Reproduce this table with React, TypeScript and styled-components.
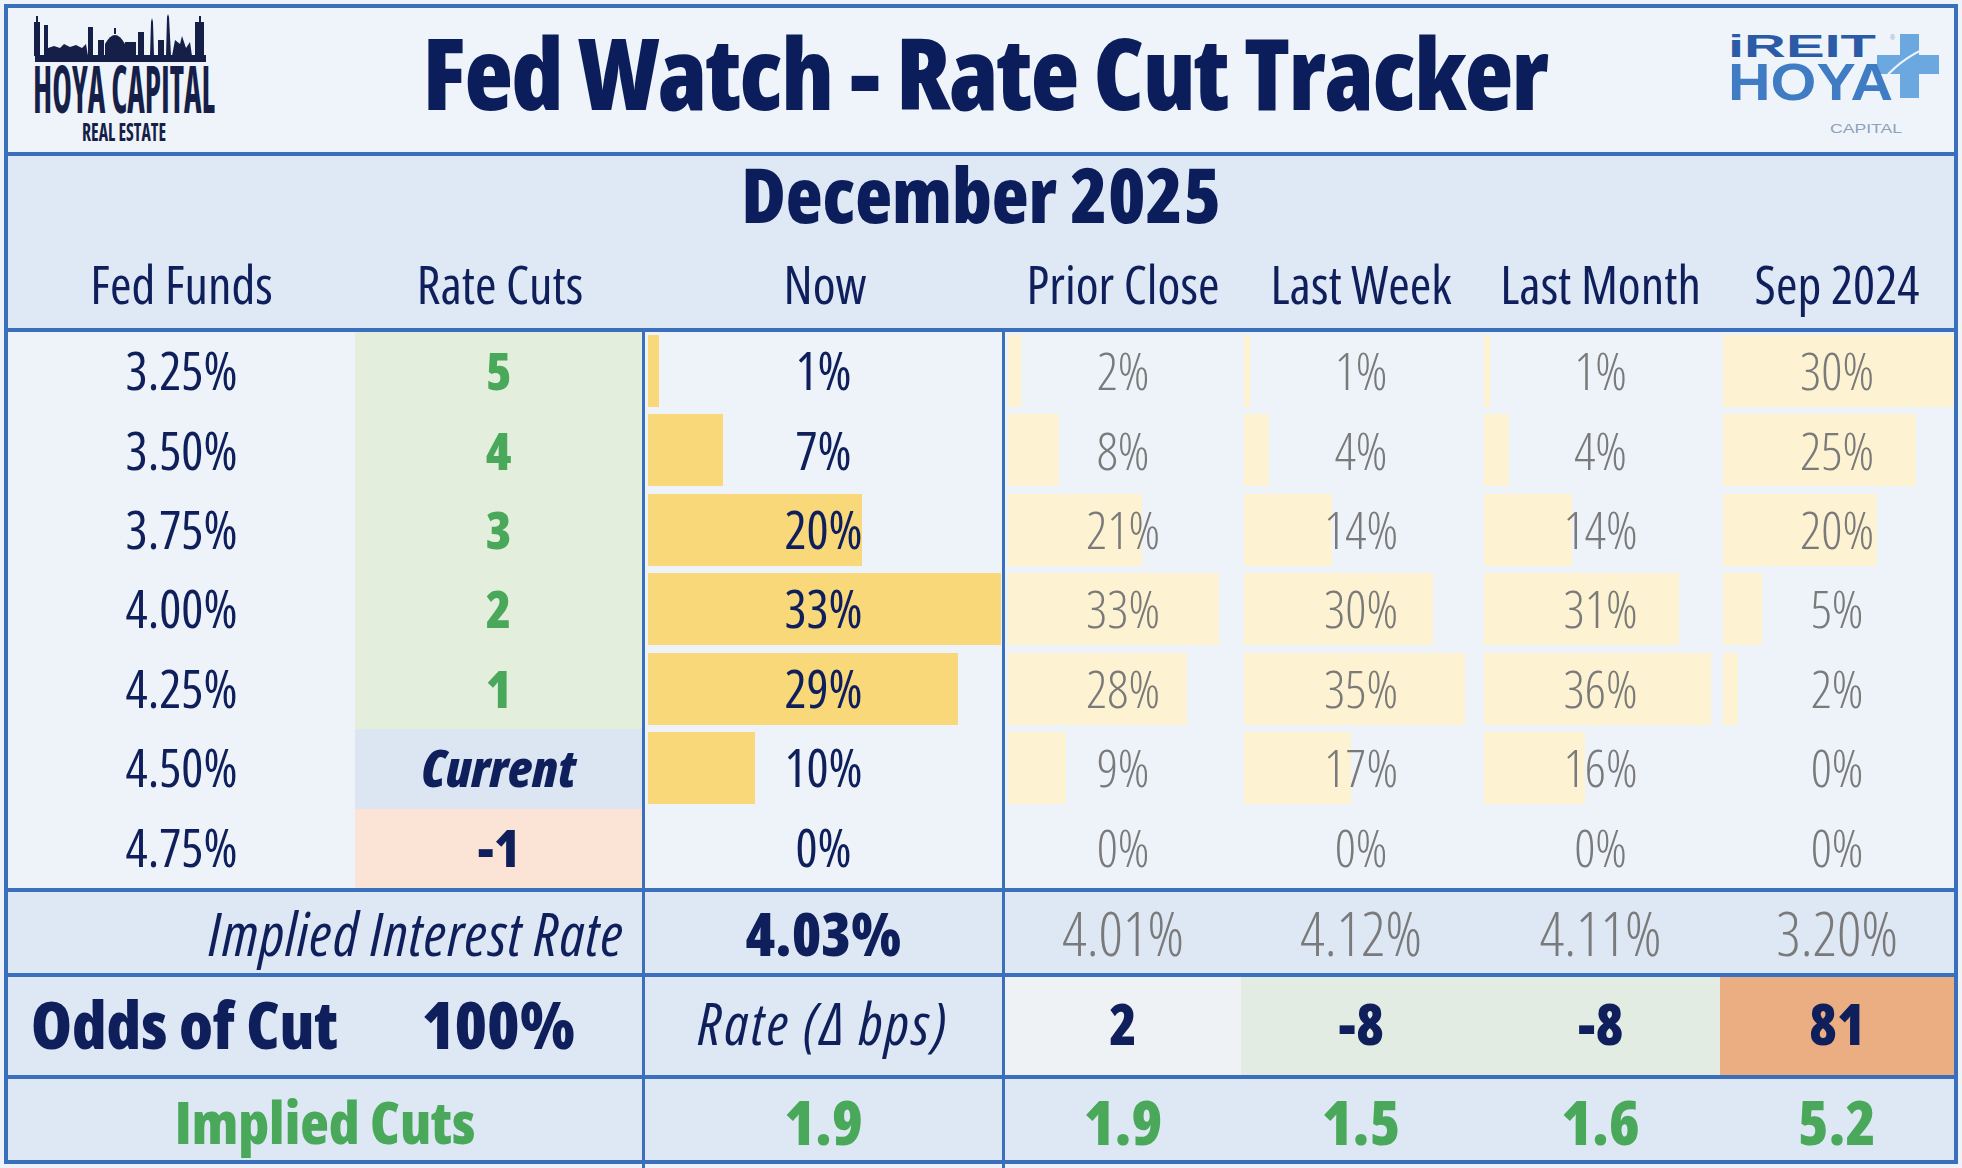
import React from "react";
import styled, { createGlobalStyle } from "styled-components";

const NAVY = "#0f1f5c";
const GRAY = "#7a7a7a";
const GREEN = "#4aa85a";
const BLUE = "#3a6fbb";
const COLS = "347px 290px 360px 236px 240px 239px 234px";

const Global = createGlobalStyle`
  html, body { margin: 0; padding: 0; background: #eef3f9; }
  body { font-family: "Open Sans", "Liberation Sans", sans-serif; }
`;

const Page = styled.div`
  width: 1962px;
  height: 1168px;
  padding: 4px;
  box-sizing: border-box;
`;

const Board = styled.div`
  width: 1954px;
  border: 4px solid ${BLUE};
  box-sizing: border-box;
  font-family: "Open Sans", "Liberation Sans", sans-serif;
  font-stretch: 75%;
  color: ${NAVY};
`;

/* ---------- title ---------- */
const TitleRow = styled.header`
  height: 144px;
  box-sizing: content-box;
  border-bottom: 4px solid ${BLUE};
  background: #eef4fa;
  display: grid;
  grid-template-columns: 1fr auto 1fr;
  align-items: start;
`;

const Title = styled.h1`
  margin: 0;
  align-self: center;
  font-size: 100px;
  line-height: 120px;
  font-weight: 800;
  letter-spacing: -1.5px;
  color: #0c1d5b;
  white-space: nowrap;
  padding: 0 0 18px 8px;
`;

const LeftLogoBox = styled.div`
  justify-self: start;
  margin: 6px 0 0 22px;
`;

const RightLogoBox = styled.div`
  justify-self: end;
  margin: 12px 9px 0 0;
`;

/* ---------- header ---------- */
const HeaderBlock = styled.section`
  height: 172px;
  box-sizing: content-box;
  border-bottom: 4px solid ${BLUE};
  background: #dfe8f5;
  display: flex;
  flex-direction: column;
`;

const Month = styled.h2`
  margin: 0;
  text-align: center;
  font-size: 76px;
  line-height: 76px;
  font-weight: 800;
  color: #0c1d5b;
`;

const HeaderGrid = styled.div`
  display: grid;
  grid-template-columns: ${COLS};
  margin-top: 22px;
`;

const HeadLabel = styled.div`
  text-align: center;
  font-size: 52px;
  line-height: 60px;
  font-weight: 400;
  white-space: nowrap;
`;

/* ---------- data ---------- */
const DataGrid = styled.div`
  display: grid;
  grid-template-columns: ${COLS};
  grid-auto-rows: 79.43px;
  background: #edf3f9;
`;

const RateCell = styled.div`
  display: flex;
  align-items: center;
  justify-content: center;
  padding-bottom: 4px;
  font-size: 52px;
  font-stretch: 87%;
  font-weight: 400;
  color: ${NAVY};
`;

type Tone = "green" | "current" | "neg";
const toneBg: Record<Tone, string> = {
  green: "#e3efdc",
  current: "#dce6f3",
  neg: "#fbe4d6",
};

const CutCell = styled.div<{ $tone: Tone }>`
  display: flex;
  align-items: center;
  justify-content: center;
  padding-bottom: 4px;
  background: ${(p) => toneBg[p.$tone]};
  border-right: 3px solid ${BLUE};
  box-sizing: border-box;
  font-size: 52px;
  font-weight: 800;
  font-style: ${(p) => (p.$tone === "current" ? "italic" : "normal")};
  color: ${(p) => (p.$tone === "green" ? GREEN : NAVY)};
`;

const BarCell = styled.div<{ $divider?: boolean }>`
  display: grid;
  grid-template: 1fr / 1fr;
  box-sizing: border-box;
  border-right: ${(p) => (p.$divider ? `3px solid ${BLUE}` : "none")};
`;

const Bar = styled.div<{ $strong?: boolean }>`
  grid-area: 1 / 1;
  justify-self: start;
  align-self: start;
  height: 72px;
  margin: 3px 0 0 3px;
  background: ${(p) => (p.$strong ? "#f8d878" : "#fdf2d2")};
`;

const BarValue = styled.div<{ $strong?: boolean }>`
  grid-area: 1 / 1;
  display: flex;
  align-items: center;
  justify-content: center;
  padding-bottom: 4px;
  font-size: 52px;
  font-stretch: 87%;
  font-weight: ${(p) => (p.$strong ? 400 : 360)};
  color: ${(p) => (p.$strong ? NAVY : GRAY)};
`;

/* ---------- summary ---------- */
const SummaryRow = styled.div<{ $h: number; $lift: number }>`
  display: grid;
  grid-template-columns: ${COLS};
  height: ${(p) => p.$h}px;
  box-sizing: content-box;
  border-top: 4px solid ${BLUE};
  background: #dee8f5;

  & > * {
    padding-bottom: ${(p) => p.$lift}px;
  }
`;

const SumCell = styled.div<{
  $span?: boolean;
  $divider?: boolean;
  $align?: "left" | "right" | "center";
  $bg?: string;
}>`
  grid-column: ${(p) => (p.$span ? "1 / 3" : "auto")};
  display: flex;
  align-items: center;
  justify-content: ${(p) =>
    p.$align === "left" ? "flex-start" : p.$align === "right" ? "flex-end" : "center"};
  padding-left: ${(p) => (p.$align === "left" ? "23px" : "0")};
  padding-right: ${(p) => (p.$align === "right" ? "18px" : "0")};
  box-sizing: border-box;
  background: ${(p) => p.$bg ?? "transparent"};
  border-right: ${(p) => (p.$divider ? `3px solid ${BLUE}` : "none")};
  white-space: nowrap;
`;

const ItalicText = styled.span<{ $size: number; $track: number }>`
  font-size: ${(p) => p.$size}px;
  font-style: italic;
  font-weight: 400;
  font-stretch: 75%;
  letter-spacing: ${(p) => p.$track}px;
  color: ${NAVY};
`;

const BoldText = styled.span<{ $size: number; $green?: boolean; $stretch?: number }>`
  font-size: ${(p) => p.$size}px;
  font-weight: 800;
  font-stretch: ${(p) => p.$stretch ?? 75}%;
  color: ${(p) => (p.$green ? GREEN : NAVY)};
`;

const GrayText = styled.span`
  font-size: 60px;
  font-weight: 360;
  font-stretch: 87%;
  color: ${GRAY};
`;

/* ---------- logos ---------- */
function HoyaLogo() {
  return (
    <svg width="200" height="132" viewBox="0 0 200 132">
      <g fill="#161f48">
        <rect x="5" y="41" width="171" height="7" />
        <rect x="4" y="8" width="6" height="34" />
        <rect x="6" y="2" width="2" height="7" />
        <rect x="14" y="11" width="4" height="31" />
        <polygon points="18,42 18,34 24,32 30,34 34,30 40,33 46,31 52,34 56,30 58,42" />
        <rect x="58" y="13" width="5" height="29" />
        <rect x="68" y="26" width="6" height="16" />
        <path d="M75 42 L75 30 Q85 12 95 30 L95 42 Z" />
        <rect x="84" y="14" width="2" height="6" />
        <rect x="95" y="28" width="11" height="14" />
        <rect x="108" y="18" width="6" height="24" />
        <polygon points="120,42 121,8 122,4 123,8 124,42" />
        <rect x="128" y="26" width="6" height="16" />
        <polygon points="136,42 137,3 138,0 139,3 141,42" />
        <polygon points="142,42 145,26 150,30 152,22 156,34 160,28 162,42" />
        <rect x="165" y="8" width="9" height="34" />
        <rect x="169" y="2" width="2" height="7" />
      </g>
      <text
        x="3"
        y="99"
        fontFamily="Open Sans, Liberation Sans, sans-serif"
        fontWeight="700"
        fontSize="67"
        fill="#161f48"
        textLength="182"
        lengthAdjust="spacingAndGlyphs"
      >
        HOYA CAPITAL
      </text>
      <text
        x="52"
        y="127"
        fontFamily="Open Sans, Liberation Sans, sans-serif"
        fontWeight="700"
        fontSize="24"
        fill="#161f48"
        textLength="84"
        lengthAdjust="spacingAndGlyphs"
      >
        REAL ESTATE
      </text>
    </svg>
  );
}

function IreitLogo() {
  return (
    <svg width="225" height="120" viewBox="0 0 225 120">
      <rect x="180" y="14" width="19" height="64" fill="#6aa8df" />
      <rect x="157" y="35" width="62" height="19" fill="#6aa8df" />
      <path d="M160 64 Q178 40 208 27" stroke="#eef4fa" strokeWidth="2" fill="none" />
      <text
        x="8"
        y="37"
        fontFamily="Liberation Sans, Arial, sans-serif"
        fontWeight="700"
        fontSize="31"
        fill="#2b5aa6"
        textLength="148"
        lengthAdjust="spacingAndGlyphs"
      >
        iREIT
      </text>
      <text x="170" y="20" fontFamily="Liberation Sans, sans-serif" fontSize="7" fill="#8da2ba">
        ®
      </text>
      <text
        x="8"
        y="80"
        fontFamily="Liberation Sans, Arial, sans-serif"
        fontWeight="700"
        fontSize="52"
        fill="#3f7cc4"
        textLength="165"
        lengthAdjust="spacingAndGlyphs"
      >
        HOYA
      </text>
      <text
        x="110"
        y="113"
        fontFamily="Liberation Sans, Arial, sans-serif"
        fontSize="12"
        fill="#8da2ba"
        textLength="72"
        lengthAdjust="spacingAndGlyphs"
      >
        CAPITAL
      </text>
    </svg>
  );
}

/* ---------- data ---------- */
type Row = { rate: string; cut: string; tone: Tone; vals: number[] };
const rows: Row[] = [
  { rate: "3.25%", cut: "5", tone: "green", vals: [1, 2, 1, 1, 30] },
  { rate: "3.50%", cut: "4", tone: "green", vals: [7, 8, 4, 4, 25] },
  { rate: "3.75%", cut: "3", tone: "green", vals: [20, 21, 14, 14, 20] },
  { rate: "4.00%", cut: "2", tone: "green", vals: [33, 33, 30, 31, 5] },
  { rate: "4.25%", cut: "1", tone: "green", vals: [29, 28, 35, 36, 2] },
  { rate: "4.50%", cut: "Current", tone: "current", vals: [10, 9, 17, 16, 0] },
  { rate: "4.75%", cut: "-1", tone: "neg", vals: [0, 0, 0, 0, 0] },
];
// pixels of bar per percentage point, one per column (Now, Prior Close, Last Week, Last Month, Sep 2024)
const pxPerPoint = [10.7, 6.4, 6.3, 6.3, 7.7];
const headers = ["Fed Funds", "Rate Cuts", "Now", "Prior Close", "Last Week", "Last Month", "Sep 2024"];

export default function App() {
  return (
    <Page>
      <Global />
      <Board>
        <TitleRow>
          <LeftLogoBox>
            <HoyaLogo />
          </LeftLogoBox>
          <Title>Fed Watch - Rate Cut Tracker</Title>
          <RightLogoBox>
            <IreitLogo />
          </RightLogoBox>
        </TitleRow>

        <HeaderBlock>
          <Month>December 2025</Month>
          <HeaderGrid>
            {headers.map((h) => (
              <HeadLabel key={h}>{h}</HeadLabel>
            ))}
          </HeaderGrid>
        </HeaderBlock>

        <DataGrid>
          {rows.map((r) => (
            <React.Fragment key={r.rate}>
              <RateCell>{r.rate}</RateCell>
              <CutCell $tone={r.tone}>{r.cut}</CutCell>
              {r.vals.map((v, i) => (
                <BarCell key={i} $divider={i === 0}>
                  {v > 0 && <Bar $strong={i === 0} style={{ width: `${v * pxPerPoint[i]}px` }} />}
                  <BarValue $strong={i === 0}>{v}%</BarValue>
                </BarCell>
              ))}
            </React.Fragment>
          ))}
        </DataGrid>

        <SummaryRow $h={81} $lift={12}>
          <SumCell $span $divider $align="right">
            <ItalicText $size={60} $track={1}>
              Implied Interest Rate
            </ItalicText>
          </SumCell>
          <SumCell $divider>
            <BoldText $size={60} $stretch={77}>
              4.03%
            </BoldText>
          </SumCell>
          {["4.01%", "4.12%", "4.11%", "3.20%"].map((t) => (
            <SumCell key={t}>
              <GrayText>{t}</GrayText>
            </SumCell>
          ))}
        </SummaryRow>

        <SummaryRow $h={98} $lift={6}>
          <SumCell $align="left">
            <BoldText $size={66}>Odds of Cut</BoldText>
          </SumCell>
          <SumCell $divider>
            <BoldText $size={66}>100%</BoldText>
          </SumCell>
          <SumCell $divider>
            <ItalicText $size={58} $track={2.5}>
              Rate (Δ bps)
            </ItalicText>
          </SumCell>
          <SumCell $bg="#eef2f5">
            <BoldText $size={56}>2</BoldText>
          </SumCell>
          <SumCell $bg="#e3ece3">
            <BoldText $size={56}>-8</BoldText>
          </SumCell>
          <SumCell $bg="#e3ece3">
            <BoldText $size={56}>-8</BoldText>
          </SumCell>
          <SumCell $bg="#ebae83">
            <BoldText $size={56}>81</BoldText>
          </SumCell>
        </SummaryRow>

        <SummaryRow $h={81} $lift={14}>
          <SumCell $span $divider>
            <BoldText $size={59} $green>
              Implied Cuts
            </BoldText>
          </SumCell>
          <SumCell $divider>
            <BoldText $size={62} $green>
              1.9
            </BoldText>
          </SumCell>
          {["1.9", "1.5", "1.6", "5.2"].map((t, i) => (
            <SumCell key={i}>
              <BoldText $size={62} $green>
                {t}
              </BoldText>
            </SumCell>
          ))}
        </SummaryRow>
      </Board>
    </Page>
  );
}
